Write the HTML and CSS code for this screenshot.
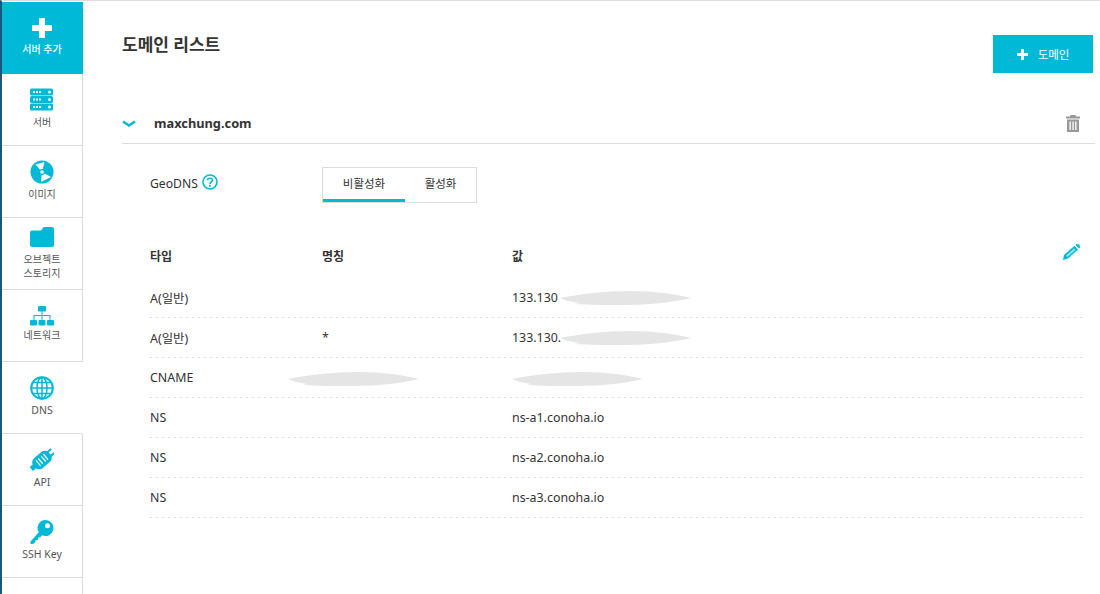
FILE: index.html
```html
<!DOCTYPE html>
<html lang="ko">
<head>
  <meta charset="UTF-8">
  <title>도메인 리스트</title>
  <link rel="stylesheet" href="styles.css">
</head>
<body>
  <div class="app">
    <nav class="sidebar">
      <a class="nav-item nav-add">
        <svg class="nav-icon" width="20" height="20" viewBox="0 0 20 20"><path d="M7 0h6v7h7v6h-7v7H7v-7H0V7h7z" fill="#fff"/></svg>
        <span>서버 추가</span>
      </a>
      <a class="nav-item">
        <svg class="nav-icon" width="24" height="24" viewBox="0 0 24 24">
          <g fill="#00b9d6">
            <rect y="0.500" width="23" height="7" rx="1.500"/>
            <rect y="8" width="23" height="7" rx="1.500"/>
            <rect y="15.500" width="23" height="7" rx="1.500"/>
          </g>
          <g fill="#fff">
            <path d="M3 3h2v2H3zM6 3h2v2H6zM9 3h2v2H9zM3 10.500h2v2H3zM6 10.500h2v2H6zM9 10.500h2v2H9zM3 18h2v2H3zM6 18h2v2H6zM9 18h2v2H9z"/>
            <circle cx="19.500" cy="4" r="1.500"/>
            <circle cx="19.500" cy="11.500" r="1.500"/>
            <circle cx="19.500" cy="19" r="1.500"/>
          </g>
        </svg>
        <span>서버</span>
      </a>
      <a class="nav-item">
        <svg class="nav-icon" width="24" height="24" viewBox="0 0 24 24">
          <circle cx="12" cy="12" r="11.500" fill="#00b9d6"/>
          <path d="M12 12 5.500 4.500 14.500 2zM12 12 11 22 21 17z" fill="#fff"/>
          <circle cx="12" cy="12" r="3" fill="#00b9d6"/>
          <circle cx="12" cy="12" r="1.800" fill="#fff"/>
        </svg>
        <span>이미지</span>
      </a>
      <a class="nav-item nav-two-line">
        <svg class="nav-icon" width="24" height="20" viewBox="0 0 24 20"><path d="M2 3.500h8.500C12 3.500 12.500 0 14.500 0H21.500A2.500 2.500 0 0 1 24 2.500V17.500A2.500 2.500 0 0 1 21.500 20H2.500A2.500 2.500 0 0 1 0 17.500V5.500A2 2 0 0 1 2 3.500z" fill="#00b9d6"/></svg>
        <span>오브젝트<br>스토리지</span>
      </a>
      <a class="nav-item nav-network">
        <svg class="nav-icon" width="24" height="20" viewBox="0 0 24 20">
          <g fill="#00b9d6">
            <rect x="8" y="0" width="8" height="5.500" rx="1"/>
            <rect x="0" y="14" width="7" height="5.500" rx="1"/>
            <rect x="8.500" y="14" width="7" height="5.500" rx="1"/>
            <rect x="17" y="14" width="7" height="5.500" rx="1"/>
            <path d="M11.500 5h1v4h8v5h-1v-4h-7v4h-1v-4h-7v4h-1V9h8z"/>
          </g>
        </svg>
        <span>네트워크</span>
      </a>
      <a class="nav-item nav-active nav-latin">
        <svg class="nav-icon" width="24" height="24" viewBox="0 0 24 24" fill="none" stroke="#00b9d6" stroke-width="1.500">
          <circle cx="12" cy="12" r="10.800" stroke-width="2"/>
          <ellipse cx="12" cy="12" rx="5" ry="10.800"/>
          <path d="M12 1v22M1.200 12h21.600M3 6.500h18M3 17.500h18"/>
        </svg>
        <span>DNS</span>
      </a>
      <a class="nav-item nav-latin">
        <svg class="nav-icon" width="24" height="24" viewBox="0 0 24 24">
          <g transform="rotate(-40 12 12)">
            <rect x="2" y="5.500" width="20" height="13" rx="5" fill="#00b9d6"/>
            <path d="M-2 9.500h5v5h-5zM21 8.500h5v2h-5zM21 13.500h5v2h-5z" fill="#00b9d6"/>
            <path d="M6.500 8.500h1.300v7H6.500zM9.500 8.500h1.300v7H9.500zM13.200 8.500h1.300v7h-1.300zM16.200 8.500h1.300v7h-1.300z" fill="#fff"/>
          </g>
        </svg>
        <span>API</span>
      </a>
      <a class="nav-item nav-latin">
        <svg class="nav-icon" width="24" height="24" viewBox="0 0 24 24">
          <path d="M15.500 0A8 8 0 1 1 12.200 15.300L10 17.500H8V20H5.500V22L3 24H.5V21.500L8.800 12.200A8 8 0 0 1 15.500 0z" fill="#00b9d6"/>
          <circle cx="17.500" cy="5.800" r="2.500" fill="#fff"/>
        </svg>
        <span>SSH Key</span>
      </a>
    </nav>

    <main class="content">
      <header class="page-head">
        <h1>도메인 리스트</h1>
        <button class="add-domain">
          <svg width="11" height="11" viewBox="0 0 11 11"><path d="M4 0h3v4h4v3H7v4H4V7H0V4h4z" fill="#fff"/></svg>
          <span>도메인</span>
        </button>
      </header>

      <div class="domain-bar">
        <svg class="chevron" width="14" height="8" viewBox="0 0 14 8"><path d="M1 1.500 7 5.500 13 1.500" fill="none" stroke="#00b9d6" stroke-width="2.600"/></svg>
        <strong>maxchung.com</strong>
        <svg class="trash" width="14" height="17" viewBox="0 0 14 17"><path d="M4.500 0h5l.5 1.500h4V3.500H0V1.500h4zM1 4.500h12V17H1zM3.500 6.500V15h1.300V6.500zM6.400 6.500V15h1.300V6.500zM9.200 6.500V15h1.300V6.500z" fill="#999" fill-rule="evenodd"/></svg>
      </div>

      <div class="geo-row">
        <div class="geo-label">
          <span class="geo-text">GeoDNS</span>
          <svg width="16" height="16" viewBox="0 0 16 16">
            <circle cx="8" cy="8" r="7" fill="none" stroke="#00b9d6" stroke-width="1.600"/>
            <path d="M5.500 6.300C5.500 3.500 10.500 3.500 10.500 6.200 10.500 8 8 8 8 10" fill="none" stroke="#00b9d6" stroke-width="1.600"/>
            <rect x="7.100" y="10.800" width="1.800" height="1.800" fill="#00b9d6"/>
          </svg>
        </div>
        <div class="toggle">
          <span class="toggle-tab toggle-on">비활성화</span>
          <span class="toggle-tab">활성화</span>
        </div>
      </div>

      <div class="records">
        <div class="rec-head">
          <span>타입</span>
          <span>명칭</span>
          <span>값</span>
          <svg class="pencil" width="17" height="16" viewBox="0 0 17 16"><path d="M0 16 1 11 11.500 1.800 15 5.500 5 14.500zM12.500 1 13.500 0 16.500 0.500 17 3.500 16 4.500z" fill="#00b9d6"/><path d="M3 11.500 11 4.500 12.500 6 4.500 13z" fill="#8fe0ee"/></svg>
        </div>
        <div class="rec-row">
          <span>A(일반)</span>
          <span></span>
          <span class="rec-value">133.130
            <svg class="blot blot-after" width="131" height="14" viewBox="0 0 131 14"><path d="M0 7C20 3 45 0 70 0S115 3 131 7C115 11 90 14 65 14 50 14 30 14 14 13L20 12C10 11 5 9 0 7z" fill="#e5e5e5"/></svg>
          </span>
        </div>
        <div class="rec-row">
          <span>A(일반)</span>
          <span>*</span>
          <span class="rec-value">133.130.
            <svg class="blot blot-after" width="131" height="14" viewBox="0 0 131 14"><path d="M0 7C20 3 45 0 70 0S115 3 131 7C115 11 90 14 65 14 50 14 30 14 14 13L20 12C10 11 5 9 0 7z" fill="#e5e5e5"/></svg>
          </span>
        </div>
        <div class="rec-row">
          <span>CNAME</span>
          <span class="rec-value">
            <svg class="blot blot-name" width="131" height="14" viewBox="0 0 131 14"><path d="M0 7C20 3 45 0 70 0S115 3 131 7C115 11 90 14 65 14 50 14 30 14 14 13L20 12C10 11 5 9 0 7z" fill="#e5e5e5"/></svg>
          </span>
          <span class="rec-value">
            <svg class="blot blot-start" width="131" height="14" viewBox="0 0 131 14"><path d="M0 7C20 3 45 0 70 0S115 3 131 7C115 11 90 14 65 14 50 14 30 14 14 13L20 12C10 11 5 9 0 7z" fill="#e5e5e5"/></svg>
          </span>
        </div>
        <div class="rec-row"><span>NS</span><span></span><span>ns-a1.conoha.io</span></div>
        <div class="rec-row"><span>NS</span><span></span><span>ns-a2.conoha.io</span></div>
        <div class="rec-row"><span>NS</span><span></span><span>ns-a3.conoha.io</span></div>
      </div>
    </main>
  </div>
</body>
</html>
```

FILE: styles.css
```css
* {
  box-sizing: border-box;
}
html, body {
  height: 100%;
}
body {
  margin: 0;
  background: #fff;
  color: #333;
  font-family: "Noto Sans", "Noto Sans CJK KR", sans-serif;
  font-size: 12px;
  overflow: hidden;
}
.app {
  display: flex;
  height: 594px;
  border-top: 1px solid #ddd;
  border-left: 2px solid #1c5580;
}
.sidebar {
  width: 81px;
  flex: none;
  display: flex;
  flex-direction: column;
  margin-top: 1px;
  border-right: 1px solid #ddd;
}
.nav-item {
  display: flex;
  flex-direction: column;
  align-items: center;
  height: 72px;
  flex: none;
  padding-top: 14px;
  margin-right: -1px;
  border-right: 1px solid #ddd;
  border-bottom: 1px solid #ddd;
  color: #555;
  font-size: 10px;
  line-height: 14px;
  text-align: center;
}
.nav-icon {
  display: block;
  height: 24px;
  margin-bottom: 3px;
}
.nav-latin {
  font-size: 10.5px;
}
.nav-add {
  background: #00b9d6;
  border-color: #00b9d6;
  color: #fff;
  font-weight: 500;
}
.nav-add .nav-icon {
  margin-top: 2px;
  height: 20px;
  margin-bottom: 4px;
}
.nav-two-line {
  padding-top: 7px;
}
.nav-two-line .nav-icon {
  margin-bottom: 3px;
}
.nav-network .nav-icon {
  margin-bottom: 0;
}
.nav-active {
  border-right-color: #fff;
  position: relative;
}
.content {
  flex: 1;
  padding: 0 5px 0 39px;
}
.page-head {
  display: flex;
  justify-content: space-between;
  align-items: flex-start;
  height: 103px;
  padding-right: 2px;
}
.page-head h1 {
  margin: 31px 0 0;
  color: #333;
  font-size: 17px;
  line-height: 26px;
  font-weight: 700;
}
.add-domain {
  display: flex;
  align-items: center;
  justify-content: center;
  gap: 10px;
  width: 100px;
  height: 38px;
  margin-top: 34px;
  border: 0;
  background: #00b9d6;
  color: #fff;
  font-family: inherit;
  font-size: 11.5px;
}
.domain-bar {
  display: flex;
  align-items: center;
  height: 40px;
  border-bottom: 1px solid #ddd;
  padding-bottom: 1px;
  color: #333;
  font-size: 12.8px;
}
.domain-bar strong {
  margin-left: 18px;
}
.chevron {
  flex: none;
  margin-top: 2px;
}
.trash {
  margin-left: auto;
  margin-right: 15px;
}
.geo-row {
  display: flex;
  padding: 23px 0 0 28px;
  height: 59px;
}
.geo-label {
  display: flex;
  align-items: flex-start;
  gap: 4px;
  width: 172px;
  padding-top: 7px;
  font-size: 12.2px;
  line-height: 18px;
}
.geo-text {
  margin-top: 1px;
}
.toggle {
  display: flex;
  height: 36px;
  width: 155px;
  border: 1px solid #ddd;
}
.toggle-tab {
  flex: 1;
  text-align: center;
  color: #333;
  font-size: 11.5px;
  line-height: 32px;
}
.toggle-on {
  flex: none;
  width: 82px;
  border-bottom: 3px solid #00b9d6;
}
.records {
  margin: 36px 13px 0 28px;
}
.rec-head,
.rec-row {
  display: grid;
  grid-template-columns: 172px 190px 1fr;
  align-items: center;
  font-size: 12.4px;
}
.rec-head {
  height: 39px;
  padding-bottom: 6px;
  position: relative;
  font-size: 12px;
  font-weight: 700;
}
.pencil {
  position: absolute;
  right: 2px;
  top: 5px;
}
.rec-row {
  height: 40px;
  padding-bottom: 1px;
  background: linear-gradient(to right, #ddd 2px, transparent 2px) left bottom / 6px 1px repeat-x;
}
.rec-row span {
  position: relative;
}
.rec-value {
  display: block;
  min-height: 14px;
}
.blot {
  position: absolute;
  top: 1px;
}
.blot-after {
  left: 48px;
  top: 2px;
}
.blot-name {
  left: -34px;
}
.blot-start {
  left: 0;
}
```
